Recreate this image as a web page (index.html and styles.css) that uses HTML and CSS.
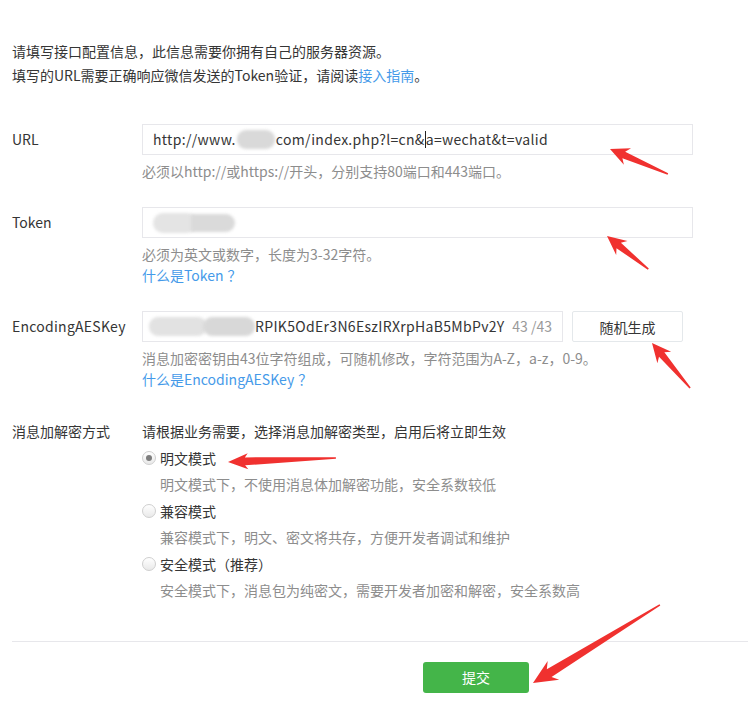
FILE: index.html
```html
<!DOCTYPE html>
<html lang="zh-CN">
<head>
<meta charset="utf-8">
<title>服务器配置</title>
<link rel="stylesheet" href="styles.css">
</head>
<body>
<div class="page">
  <div class="intro">
    <p>请填写接口配置信息，此信息需要你拥有自己的服务器资源。</p>
    <p>填写的URL需要正确响应微信发送的Token验证，请阅读<a class="link" href="#">接入指南</a>。</p>
  </div>

  <div class="form">
    <div class="row">
      <div class="lbl">URL</div>
      <div class="ctrl">
        <div class="input input-wide"><span>http://www.</span><span class="blob blob-url"></span><span>com/index.php?l=cn&amp;</span><span class="caret"></span><span>a=wechat&amp;t=valid</span></div>
        <p class="hint">必须以http://或https://开头，分别支持80端口和443端口。</p>
      </div>
    </div>

    <div class="row">
      <div class="lbl">Token</div>
      <div class="ctrl">
        <div class="input input-wide"><span class="blob blob-tok1"></span><span class="blob blob-tok2"></span></div>
        <p class="hint">必须为英文或数字，长度为3-32字符。</p>
        <a class="link hint-link" href="#">什么是Token<span class="q">？</span></a>
      </div>
    </div>

    <div class="row">
      <div class="lbl lbl-key">EncodingAESKey</div>
      <div class="ctrl">
        <div class="inline">
          <div class="input input-key"><span class="blob blob-key1"></span><span class="blob blob-key2"></span><span>RPIK5OdEr3N6EszIRXrpHaB5MbPv2Y</span><span class="count">43 /43</span></div>
          <button class="btn" type="button">随机生成</button>
        </div>
        <p class="hint">消息加密密钥由43位字符组成，可随机修改，字符范围为A-Z，a-z，0-9。</p>
        <a class="link hint-link" href="#">什么是EncodingAESKey<span class="q">？</span></a>
      </div>
    </div>

    <div class="row row-enc">
      <div class="lbl lbl-enc">消息加解密方式</div>
      <div class="ctrl">
        <p class="enc-line">请根据业务需要，选择消息加解密类型，启用后将立即生效</p>
        <div class="opt"><span class="radio checked"></span><span>明文模式</span></div>
        <p class="enc-line opt-desc">明文模式下，不使用消息体加解密功能，安全系数较低</p>
        <div class="opt"><span class="radio"></span><span>兼容模式</span></div>
        <p class="enc-line opt-desc">兼容模式下，明文、密文将共存，方便开发者调试和维护</p>
        <div class="opt"><span class="radio"></span><span>安全模式（推荐）</span></div>
        <p class="enc-line opt-desc">安全模式下，消息包为纯密文，需要开发者加密和解密，安全系数高</p>
      </div>
    </div>
  </div>

  <div class="divider"></div>
  <div class="actions"><button class="btn-primary" type="button">提交</button></div>

  <svg class="arrows" width="748" height="716" viewBox="0 0 748 716">
    <g fill="#f0312f">
      <polygon transform="translate(610 149) rotate(23.3)" points="0,0 19,-9 15,-3.5 63,-0.8 63,0.8 15,3.5 19,9"/>
      <polygon transform="translate(607 236) rotate(38.8)" points="0,0 19,-9 15,-3.5 53,-0.8 53,0.8 15,3.5 19,9"/>
      <polygon transform="translate(652 343) rotate(49.8)" points="0,0 19,-9 15,-3.5 59,-0.8 59,0.8 15,3.5 19,9"/>
      <polygon transform="translate(228 462) rotate(-2.1)" points="0,0 20,-8 17,-4 108,-0.8 108,0.8 17,4 20,8"/>
      <polygon transform="translate(533 683) rotate(-31.6)" points="0,0 24,-11 19,-4.5 149,-0.8 149,0.8 19,4.5 24,11"/>
    </g>
  </svg>
</div>
</body>
</html>
```

FILE: styles.css
```css
html, body {
  margin: 0;
  padding: 0;
  background: #ffffff;
}

body {
  font-family: "Noto Sans CJK SC", "Microsoft YaHei", sans-serif;
  font-size: 14px;
  color: #353535;
}

p {
  margin: 0;
}

.page {
  position: relative;
  width: 748px;
  height: 716px;
  box-sizing: border-box;
  padding: 39px 0 0 12px;
  overflow: hidden;
}

.intro p {
  line-height: 24px;
}

.link {
  color: #459ae9;
  text-decoration: none;
}

.q {
  padding: 0 3px 0 4px;
}

.form {
  margin-top: 37px;
}

.row {
  display: flex;
  align-items: flex-start;
}

.row + .row {
  margin-top: 25px;
}

.row.row-enc {
  margin-top: 28px;
}

.lbl {
  width: 130px;
  flex: none;
  line-height: 31px;
}

.lbl.lbl-key {
  letter-spacing: 0.25px;
}

.lbl.lbl-enc {
  line-height: 26.5px;
}

.ctrl {
  display: flex;
  flex-direction: column;
  align-items: flex-start;
}

.inline {
  display: flex;
  align-items: center;
}

.input {
  box-sizing: border-box;
  height: 31px;
  border: 1px solid #e7e7eb;
  padding: 0 10px;
  display: flex;
  align-items: center;
  line-height: 29px;
  color: #353535;
  white-space: nowrap;
  background: #fff;
  letter-spacing: 0.32px;
}

.input-wide {
  width: 551px;
}

.input-key {
  width: 421px;
  padding-left: 6px;
}

.count {
  margin-left: auto;
  color: #9a9a9a;
  letter-spacing: 0;
}

.caret {
  display: inline-block;
  width: 1px;
  height: 17px;
  background: #222;
  flex: none;
}

.blob {
  display: inline-block;
  background: #d9d9d9;
  filter: blur(1.5px);
  flex: none;
}

.blob-url {
  width: 38px;
  height: 19px;
  border-radius: 9px;
  margin: 0 1px;
}

.blob-tok1 {
  width: 44px;
  height: 20px;
  border-radius: 10px;
  background: #e4e4e4;
}

.blob-tok2 {
  width: 44px;
  height: 18px;
  border-radius: 0 9px 9px 0;
  margin-left: -6px;
  background: #dadada;
}

.blob-key1 {
  width: 58px;
  height: 19px;
  border-radius: 9px;
  background: #e2e2e2;
}

.blob-key2 {
  width: 52px;
  height: 19px;
  border-radius: 9px;
  margin-left: -4px;
  background: #d8d8d8;
}

.btn {
  box-sizing: border-box;
  width: 111px;
  height: 31px;
  margin-left: 9px;
  border: 1px solid #e4e8eb;
  border-radius: 2px;
  background: #fff;
  font-family: inherit;
  font-size: 14px;
  color: #353535;
  padding: 0;
}

.hint {
  margin-top: 6px;
  line-height: 21px;
  color: #8d8d8d;
}

.hint-link {
  line-height: 21px;
}

.enc-line {
  line-height: 26.5px;
}

.opt {
  display: flex;
  align-items: center;
  height: 26.5px;
}

.opt-desc {
  padding-left: 18px;
  color: #8d8d8d;
}

.radio {
  box-sizing: border-box;
  flex: none;
  width: 14px;
  height: 14px;
  border: 1px solid #cfcfcf;
  border-radius: 50%;
  background: linear-gradient(#ffffff, #e9e9e9);
  margin-right: 4px;
  display: flex;
  align-items: center;
  justify-content: center;
}

.radio.checked::after {
  content: "";
  width: 6px;
  height: 6px;
  border-radius: 50%;
  background: #7d7d7d;
}

.divider {
  margin-top: 37px;
  height: 1px;
  background: #e7e7eb;
}

.actions {
  margin-top: 20px;
  padding-left: 411px;
}

.btn-primary {
  width: 106px;
  height: 31px;
  border: 0;
  border-radius: 3px;
  background: #44b549;
  color: #ffffff;
  font-family: inherit;
  font-size: 14px;
  padding: 0;
}

.arrows {
  position: absolute;
  left: 0;
  top: 0;
  pointer-events: none;
}
```
